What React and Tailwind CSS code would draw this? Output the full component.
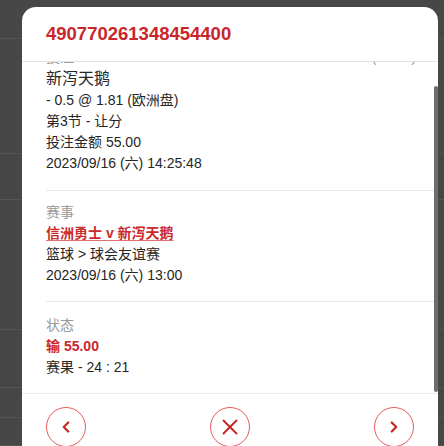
import React from "react";
import { ChevronLeft, ChevronRight, X } from "lucide-react";

const font = { fontFamily: '"Liberation Sans", "Noto Sans CJK SC", sans-serif' };

const CircleBtn = ({ children }) => (
  <button className="w-10 h-10 rounded-full border border-[#e25a5a] flex items-center justify-center text-[#c62828] bg-white">
    {children}
  </button>
);

const Section = ({ className, children }) => (
  <div className={"border-b border-[#e8e8e8] " + (className || "")}>{children}</div>
);

export default function App() {
  const bgRows = [39, 115, 46, 130, 58, 30, 28];
  return (
    <div className="relative w-[444px] h-[446px] overflow-hidden bg-[#474747]" style={font}>
      {/* dimmed page behind the dialog */}
      <div className="flex flex-col">
        {bgRows.map((h, i) => (
          <div key={i} className="border-b border-[#555555]" style={{ height: h }} />
        ))}
      </div>

      <div className="absolute left-[22px] top-[7px] w-[416px] h-[460px] bg-white rounded-t-[14px] flex flex-col">
        <div className="h-[55px] flex items-center pl-6 border-b border-[#e4e4e4] shrink-0">
          <h1 className="text-[18.5px] font-bold text-[#c9262c]">490770261348454400</h1>
        </div>

        <div className="relative h-[331px] overflow-hidden shrink-0">
          <div className="-mt-[27px] ml-6 mr-1 text-[14px] leading-[21px] text-[#262626]">
            <Section className="pt-3 pb-4">
              <div className="flex justify-between pr-[18px] text-[#999]">
                <span>投注</span>
                <span>(34:00)</span>
              </div>
              <div className="text-[16px] leading-[22px]">新泻天鹅</div>
              <div>- 0.5 @ 1.81 (欧洲盘)</div>
              <div>第3节 - 让分</div>
              <div>投注金额 55.00</div>
              <div>2023/09/16 (六) 14:25:48</div>
            </Section>
            <Section className="pt-[11px] pb-[15px]">
              <div className="text-[#999]">赛事</div>
              <div className="font-bold text-[#cc2a2a] underline decoration-[#e07070] underline-offset-2">
                信洲勇士 v 新泻天鹅
              </div>
              <div>篮球 &gt; 球会友谊赛</div>
              <div>2023/09/16 (六) 13:00</div>
            </Section>
            <div className="pt-[13px] pb-4">
              <div className="text-[#999]">状态</div>
              <div className="font-bold text-[#c9262c]">输 55.00</div>
              <div>赛果 - 24 : 21</div>
            </div>
          </div>
          <div className="absolute right-0 top-[24px] w-[4px] h-[306px] bg-[#6e6e6e] rounded-sm" />
        </div>

        <div className="border-t border-[#ececec] px-6 pt-[13px] flex justify-between">
          <CircleBtn>
            <ChevronLeft size={18} strokeWidth={3} />
          </CircleBtn>
          <CircleBtn>
            <X size={26} strokeWidth={1.8} />
          </CircleBtn>
          <CircleBtn>
            <ChevronRight size={18} strokeWidth={3} />
          </CircleBtn>
        </div>
      </div>
    </div>
  );
}
